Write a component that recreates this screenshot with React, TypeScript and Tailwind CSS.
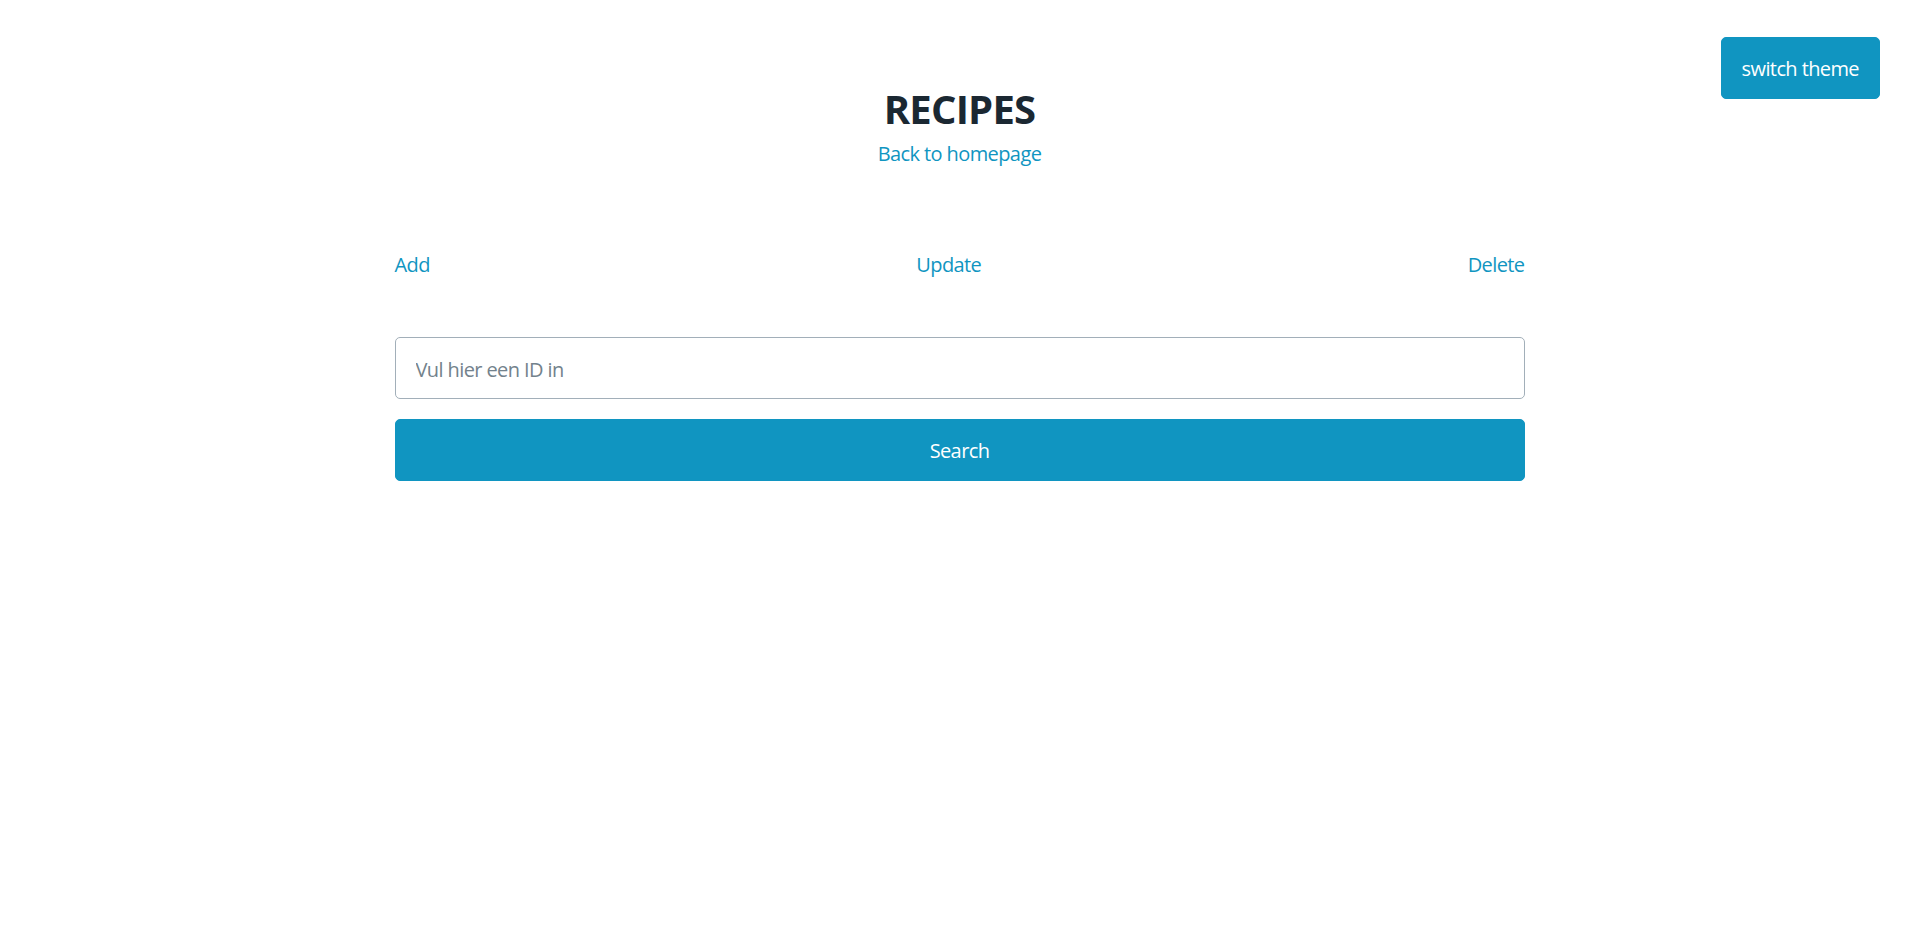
import { useState } from 'react'

export default function App() {
  const [id, setId] = useState('')

  return (
    <div className="relative min-h-[942px] bg-white font-['Open_Sans',sans-serif] text-[20px] leading-[1.5] tracking-[-0.03em] text-[#415462]">
      {/* thema knop */}
      <button className="absolute right-[39px] top-[37px] h-[62px] rounded-[5px] border border-[#1095c1] bg-[#1095c1] px-[20px] pt-[2px] text-[20px] text-white">
        switch theme
      </button>

      <main className="mx-auto w-[1130px] pt-[86px]">
        {/* kop */}
        <div className="flex flex-col items-center">
          <h1 className="text-[40px] font-bold leading-[1.125] tracking-[-0.02em] text-[#1b2832]">RECIPES</h1>
          <a href="#" className="mt-[8px] text-[#1095c1]">
            Back to homepage
          </a>
        </div>

        {/* navigatie */}
        <nav className="mt-[81px] flex justify-between">
          <a href="#" className="text-[#1095c1]">Add</a>
          <a href="#" className="text-[#1095c1]">Update</a>
          <a href="#" className="text-[#1095c1]">Delete</a>
        </nav>

        {/* zoeken */}
        <form className="mt-[57px] flex flex-col gap-[20px]" onSubmit={(e) => e.preventDefault()}>
          <input
            value={id}
            onChange={(e) => setId(e.target.value)}
            placeholder="Vul hier een ID in"
            className="h-[62px] w-full rounded-[5px] border border-[#a2afb9] px-[20px] pt-[2px] text-[20px] text-[#415462] placeholder-[#73828c] outline-none"
          />
          <button
            type="submit"
            className="h-[62px] w-full rounded-[5px] border border-[#1095c1] bg-[#1095c1] pt-[2px] text-[20px] text-white"
          >
            Search
          </button>
        </form>
      </main>
    </div>
  )
}
